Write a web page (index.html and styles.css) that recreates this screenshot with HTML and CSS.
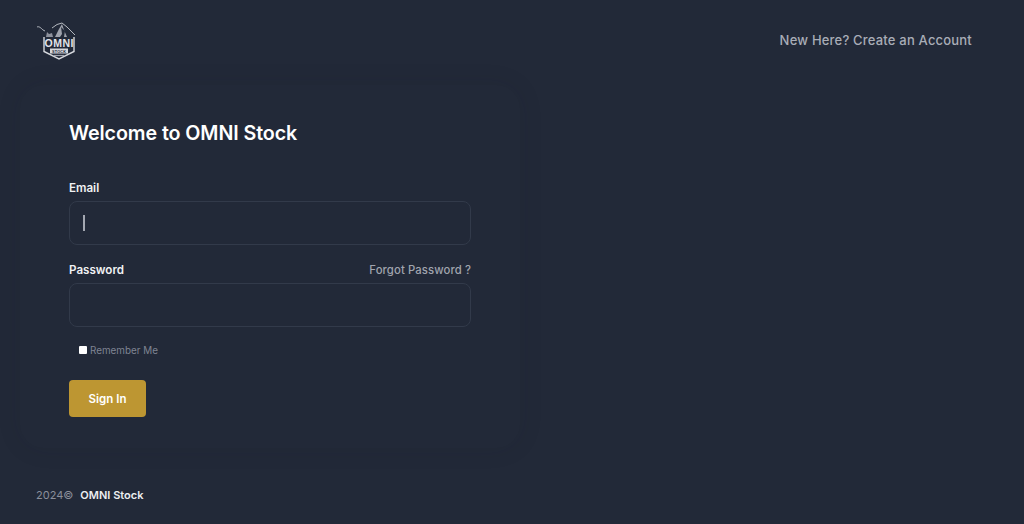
FILE: index.html
```html
<!DOCTYPE html>
<html lang="en">
<head>
<meta charset="utf-8">
<title>OMNI Stock</title>
<link rel="stylesheet" href="styles.css">
</head>
<body>
<div class="page">
  <header class="top">
    <svg class="logo" viewBox="0 0 40 38" width="40" height="38" aria-label="OMNI Stock logo">
      <path d="M1 5C3 4 5 6 7 8L9 9M16 6L21 2.5 26 1 31 5 35 9 39 13" fill="none" stroke="#c4c7ce" stroke-width=".9"/>
      <path d="M19 15L23 7 26 2 28 8 31 15Z" fill="#9ea2ac"/>
      <path d="M25 5L26 12 24 15H28L29 9Z" fill="#222938"/>
      <path d="M11 10L13 12 16 11 17 15H10Z" fill="#8d919c"/>
      <path d="M8 15V29.500L23 37 38 29.500V15" fill="none" stroke="#d5d7dc" stroke-width="1.400"/>
      <text class="logo-name" x="23" y="25" text-anchor="middle" textLength="29" lengthAdjust="spacing">OMNI</text>
      <rect x="14" y="26.500" width="18" height="5" fill="#d5d7dc"/>
      <text class="logo-sub" x="23" y="30.500" text-anchor="middle" textLength="14">STOCK</text>
      <path d="M18 33.500H28" stroke="#9ea2ac" stroke-width="1.200"/>
    </svg>
    <a class="signup" href="#">New Here? Create an Account</a>
  </header>
  <main class="card">
    <h1 class="title">Welcome to OMNI Stock</h1>
    <form class="form">
      <div class="field">
        <div class="label-row"><label class="label" for="email">Email</label></div>
        <div class="input focused"><input id="email" class="control" type="email"><span class="caret"></span></div>
      </div>
      <div class="field">
        <div class="label-row">
          <label class="label" for="password">Password</label>
          <a class="forgot" href="#">Forgot Password ?</a>
        </div>
        <div class="input"><input id="password" class="control" type="password"></div>
      </div>
      <label class="remember"><input class="check" type="checkbox"><span>Remember Me</span></label>
      <button class="submit" type="button">Sign In</button>
    </form>
  </main>
  <footer class="foot"><span class="year">2024©</span><span class="brand">OMNI Stock</span></footer>
</div>
</body>
</html>
```

FILE: styles.css
```css
* { box-sizing: border-box; }
html, body { margin: 0; height: 100%; }
body {
  background: #222938;
  color: #fff;
  font-family: Inter, "Liberation Sans", sans-serif;
  overflow: hidden;
}
.page {
  height: 524px;
  display: flex;
  flex-direction: column;
  padding: 22px 52px 0 36px;
}
.top {
  display: flex;
  justify-content: space-between;
  align-items: flex-start;
  height: 38px;
}
.logo { display: block; }
.logo-name { font: 700 10.5px "Liberation Sans", sans-serif; fill: #e2e4e8; }
.logo-sub { font: 700 3.8px "Liberation Sans", sans-serif; fill: #222938; }
.signup {
  margin-top: 9px;
  color: #a9adb7;
  font-size: 13px;
  font-weight: 500;
  line-height: 18px;
  text-decoration: none;
  letter-spacing: .015em;
}
.card {
  width: 500px;
  height: 363px;
  margin: 25px 0 0 -16px;
  padding: 34px 49px 27px;
  border-radius: 24px;
  box-shadow: 0 0 24px rgba(25, 31, 44, .1);
}
.title {
  margin: 0 0 34px;
  font-size: 19.7px;
  line-height: 28px;
  font-weight: 600;
  letter-spacing: -.005em;
}
.form { display: flex; flex-direction: column; }
.field { margin-bottom: 18px; }
.label-row {
  display: flex;
  justify-content: space-between;
  height: 20px;
  line-height: 15px;
}
.label { font-size: 11.6px; font-weight: 600; color: #f0f1f3; }
.forgot {
  font-size: 11.3px;
  font-weight: 500;
  color: #a0a4ae;
  text-decoration: none;
  letter-spacing: .01em;
}
.input {
  position: relative;
  height: 44px;
  border: 1px solid #323a4a;
  border-radius: 8px;
  background: #222938;
}
.control {
  display: block;
  width: 100%;
  height: 100%;
  padding: 0 13px;
  border: 0;
  outline: 0;
  background: transparent;
  color: #fff;
}
.caret {
  position: absolute;
  left: 13px;
  top: 13px;
  width: 1.5px;
  height: 16px;
  background: #a3a7b1;
}
.remember {
  display: flex;
  align-items: center;
  margin: -3px 0 0 10px;
  height: 16px;
  font-size: 9.9px;
  color: #7f8492;
}
.check {
  width: 8px;
  height: 8px;
  margin: 0 3px 0 0;
  appearance: none;
  background: #fff;
  border-radius: 1px;
}
.submit {
  width: 77px;
  height: 37px;
  margin-top: 22px;
  border: 0;
  border-radius: 4px;
  background: #bd9632;
  color: #fff;
  font: 600 11.5px Inter, "Liberation Sans", sans-serif;
}
.foot {
  margin-top: 39px;
  display: flex;
  gap: 7px;
  font-size: 11px;
  line-height: 16px;
}
.year { color: #8b8f9b; }
.brand { color: #eceef1; font-weight: 600; }
```
